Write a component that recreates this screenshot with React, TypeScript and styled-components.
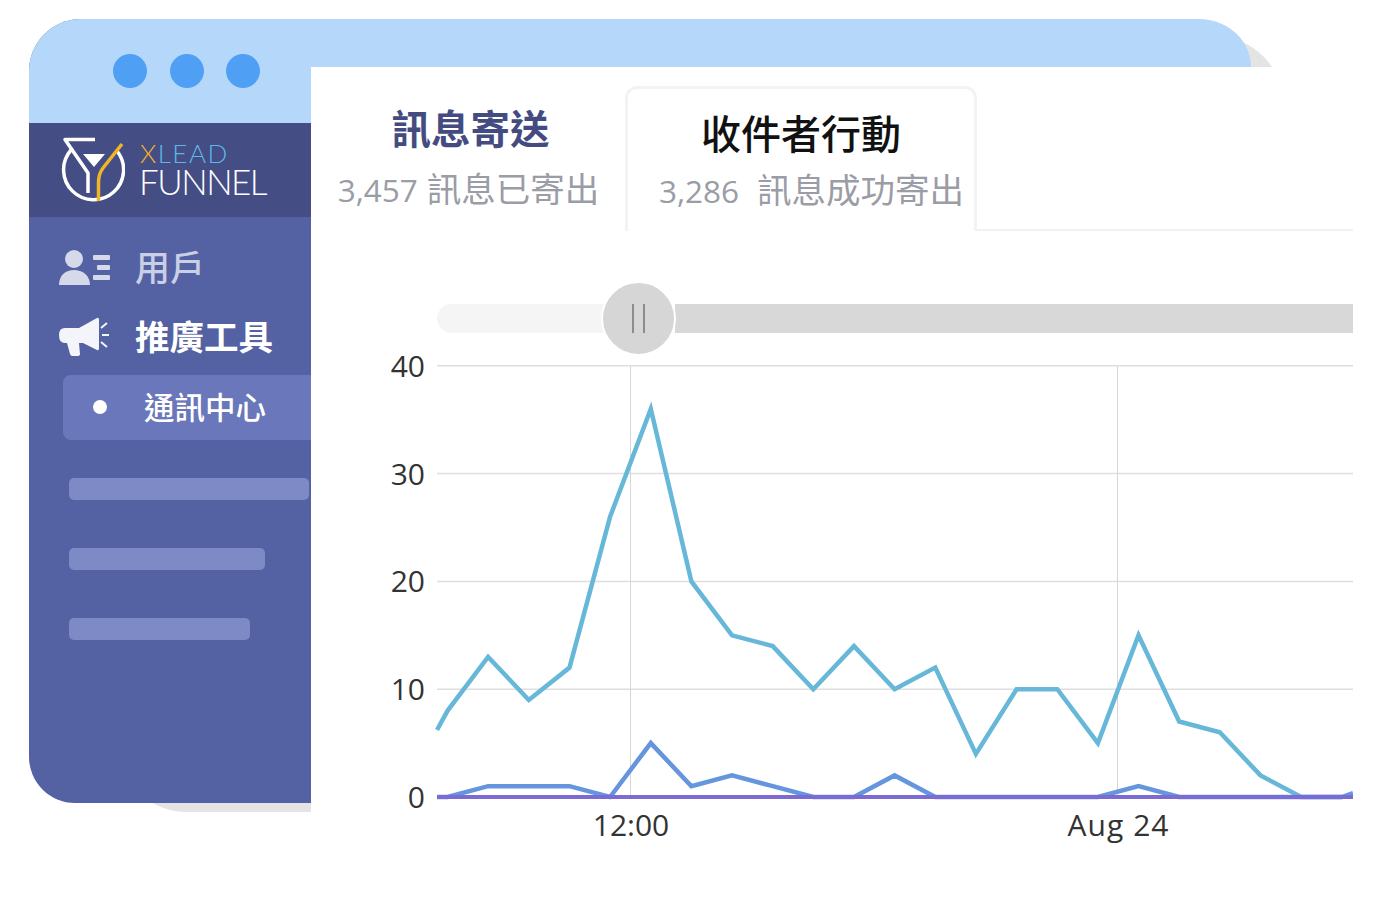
import styled, { createGlobalStyle } from 'styled-components';

const GlobalStyle = createGlobalStyle`
  html, body {
    margin: 0;
    padding: 0;
    background: #fff;
    font-family: 'Open Sans', 'Noto Sans CJK TC', sans-serif;
  }
`;

// 圖表資料 (value, 以 40.65px 為一格)
const stepX = 40.65;
const startX = 447.5;
const toY = (v: number) => 797 - v * 10.78;
const visitors = [8, 13, 9, 12, 26, 36, 20, 15, 14, 10, 14, 10, 12, 4, 10, 10, 5, 15, 7, 6, 2, 0, 0];
const sent = [0, 1, 1, 1, 0, 5, 1, 2, 1, 0, 0, 2, 0, 0, 0, 0, 0, 1, 0, 0, 0, 0, 0];

const toPoints = (data: number[]) =>
  data.map((v, i) => `${(startX + i * stepX).toFixed(1)},${toY(v).toFixed(1)}`).join(' ');

const yTicks = [0, 10, 20, 30, 40];

const App = () => {
  return (
    <Stage>
      <GlobalStyle />
      <Frame>
        <Backing />
        <Sidebar>
          <Dots>
            <Dot />
            <Dot />
            <Dot />
          </Dots>
          <LogoBand>
            <LogoMark />
            <LogoText>
              <LogoTop>
                <em>X</em>LEAD
              </LogoTop>
              <LogoBottom>FUNNEL</LogoBottom>
            </LogoText>
          </LogoBand>
          <Nav>
            <NavRow>
              <UserIcon />
              <NavLabel>用戶</NavLabel>
            </NavRow>
            <NavRow $active>
              <MegaphoneIcon />
              <NavLabel $active>推廣工具</NavLabel>
            </NavRow>
            <SubItem>
              <Bullet />
              <SubLabel>通訊中心</SubLabel>
            </SubItem>
            <Skeletons>
              <Skeleton $width={240} />
              <Skeleton $width={196} />
              <Skeleton $width={181} />
            </Skeletons>
          </Nav>
        </Sidebar>
        <Main>
          <TopStrip />
          <Panel>
            <Tabs>
              <Tab>
                <TabTitle>訊息寄送</TabTitle>
                <TabSub>
                  <b>3,457</b> 訊息已寄出
                </TabSub>
              </Tab>
              <Tab $active>
                <TabTitle $active>收件者行動</TabTitle>
                <TabSub $active>
                  <b>3,286</b>&nbsp; 訊息成功寄出
                </TabSub>
              </Tab>
            </Tabs>
            <Slider>
              <TrackLeft />
              <TrackRight />
              <Thumb>
                <Grip />
                <Grip />
              </Thumb>
            </Slider>
            <Chart viewBox="311 340 1042 510" width={1042} height={510}>
              {yTicks.map((t) => (
                <g key={t}>
                  <line x1={437} x2={1353} y1={toY(t)} y2={toY(t)} stroke="#dedede" strokeWidth={1.5} />
                  <AxisText x={425} y={toY(t) + 11} textAnchor="end">
                    {t}
                  </AxisText>
                </g>
              ))}
              <line x1={630.5} x2={630.5} y1={366} y2={797} stroke="#d6d6d6" />
              <line x1={1117.5} x2={1117.5} y1={366} y2={797} stroke="#d6d6d6" />
              <polyline
                points={`437,730 ${toPoints(visitors)}`}
                fill="none"
                stroke="#67b7d9"
                strokeWidth={4.5}
              />
              <polyline
                points={`437,797 ${toPoints(sent)} 1353,793`}
                fill="none"
                stroke="#6495dd"
                strokeWidth={4.5}
              />
              <line x1={437} x2={1353} y1={797} y2={797} stroke="#7b6bd3" strokeWidth={4} />
              <AxisText x={631} y={836} textAnchor="middle">
                12:00
              </AxisText>
              <AxisText x={1118} y={836} textAnchor="middle" textLength={101}>
                Aug 24
              </AxisText>
            </Chart>
          </Panel>
        </Main>
      </Frame>
    </Stage>
  );
};

export default App;

const LogoMark = () => (
  <svg width="64" height="68" viewBox="61 136 64 68" fill="none">
    <path d="M95 139.500H65L88 173V193" stroke="#fff" strokeWidth="3.500" strokeLinejoin="round" />
    <path d="M71 150A30 30 0 1 0 117 151" stroke="#fff" strokeWidth="3.500" />
    <path d="M83 154H105L94 167Z" fill="#fff" />
    <path d="M122 144L103 168Q98.500 174 98.500 182V201" stroke="#f0b429" strokeWidth="3.500" />
  </svg>
);

const UserIcon = () => (
  <svg width="52" height="38" viewBox="0 0 52 38" fill="#d5d9ea">
    <circle cx="15" cy="10" r="9" />
    <path d="M0 36C0 26 7 21 15 21S31 26 31 36Z" />
    <rect x="34" y="6" width="17" height="5" rx="1" />
    <rect x="38" y="16" width="13" height="5" rx="1" />
    <rect x="34" y="26" width="17" height="5" rx="1" />
  </svg>
);

const MegaphoneIcon = () => (
  <svg width="52" height="40" viewBox="0 0 52 40" fill="#f4f5fa">
    <path d="M6 11H20L38 1Q40 0 40 3V31Q40 34 38 33L24 26H20L21 37Q21 39 18 39H13Q12 39 11 37L8 26H6Q0 26 0 18Q0 11 6 11Z" />
    <path d="M42 11L48 6M43 18H50M42 25L48 30" stroke="#f4f5fa" strokeWidth="2" />
  </svg>
);

const Stage = styled.div`
  width: 1382px;
  height: 905px;
  padding: 19px 29px 0;
  box-sizing: border-box;
  overflow: hidden;
  background: #fff;
`;

const Frame = styled.div`
  position: relative;
  display: flex;
  align-items: flex-start;
  isolation: isolate;
`;

const Backing = styled.div`
  position: absolute;
  z-index: -1;
  left: 88px;
  top: 17px;
  width: 1167px;
  height: 776px;
  background: #e4e4e4;
  border-radius: 0 70px 0 70px;
`;

const Sidebar = styled.aside`
  width: 282px;
  height: 784px;
  display: flex;
  flex-direction: column;
  flex-shrink: 0;
  overflow: hidden;
  background: #5462a3;
  border-radius: 52px 0 0 46px;
`;

const Dots = styled.div`
  height: 104px;
  box-sizing: border-box;
  padding: 35px 0 0 84px;
  display: flex;
  gap: 22.500px;
  background: #b5d8fa;
`;

const Dot = styled.span`
  width: 34px;
  height: 34px;
  border-radius: 50%;
  background: #4fa0f5;
`;

const LogoBand = styled.div`
  height: 94px;
  box-sizing: border-box;
  padding-left: 32px;
  display: flex;
  align-items: center;
  gap: 14px;
  background: #444d84;
`;

const LogoText = styled.div`
  display: flex;
  flex-direction: column;
  font-family: Lato, 'Open Sans', sans-serif;
  font-weight: 300;
`;

const LogoTop = styled.div`
  margin-left: 1px;
  font-size: 26px;
  line-height: 23px;
  letter-spacing: 1.500px;
  color: #5cb8e8;

  em {
    font-style: normal;
    color: #f0b429;
  }
`;

const LogoBottom = styled.div`
  font-size: 35px;
  line-height: 33px;
  letter-spacing: -1.500px;
  color: #fff;
`;

const Nav = styled.nav`
  display: flex;
  flex-direction: column;
  padding-top: 31px;
`;

const NavRow = styled.div<{ $active?: boolean }>`
  height: 40px;
  margin-bottom: 29px;
  padding-left: 30px;
  display: flex;
  align-items: center;
  gap: 24px;

  &:nth-child(2) {
    margin-bottom: 18px;
  }
`;

const NavLabel = styled.span<{ $active?: boolean }>`
  font-size: ${({ $active }) => ($active ? '34.500px' : '35px')};
  line-height: 40px;
  font-weight: ${({ $active }) => ($active ? 700 : 500)};
  color: ${({ $active }) => ($active ? '#fff' : '#c9cfe5')};
`;

const SubItem = styled.div`
  height: 65px;
  box-sizing: border-box;
  margin-left: 34px;
  padding: 0 0 2px 30px;
  display: flex;
  align-items: center;
  gap: 37px;
  background: #6a77ba;
  border-radius: 8px 0 0 8px;
`;

const Bullet = styled.span`
  width: 14px;
  height: 14px;
  border-radius: 50%;
  background: #fff;
`;

const SubLabel = styled.span`
  font-size: 30.500px;
  line-height: 40px;
  font-weight: 500;
  color: #fff;
`;

const Skeletons = styled.div`
  display: flex;
  flex-direction: column;
  gap: 48px;
  padding: 38px 0 0 40px;
`;

const Skeleton = styled.div<{ $width: number }>`
  width: ${({ $width }) => $width}px;
  height: 22px;
  border-radius: 5px;
  background: #7e8ac6;
`;

const Main = styled.main`
  width: 1042px;
  display: flex;
  flex-direction: column;
`;

const TopStrip = styled.div`
  width: 940px;
  height: 48px;
  background: #b5d8fa;
  border-radius: 0 52px 0 0 / 0 48px 0 0;
`;

const Panel = styled.div`
  background: #fff;
  display: flex;
  flex-direction: column;
  height: 790px;
`;

const Tabs = styled.div`
  height: 164px;
  box-sizing: border-box;
  display: flex;
  align-items: flex-end;
  border-bottom: 2px solid #f1f1f1;
`;

const Tab = styled.div<{ $active?: boolean }>`
  width: ${({ $active }) => ($active ? '352px' : '314px')};
  height: 145px;
  box-sizing: border-box;
  margin-bottom: -2px;
  display: flex;
  flex-direction: column;
  align-items: center;
  padding-top: ${({ $active }) => ($active ? '19px' : '17px')};
  background: #fff;
  border: ${({ $active }) => ($active ? '3px solid #f3f3f3' : 'none')};
  border-bottom: none;
  border-radius: 12px 12px 0 0;
`;

const TabTitle = styled.div<{ $active?: boolean }>`
  margin-left: ${({ $active }) => ($active ? '0' : '5px')};
  font-size: ${({ $active }) => ($active ? '40px' : '39.500px')};
  line-height: 52px;
  font-weight: ${({ $active }) => ($active ? 500 : 700)};
  color: ${({ $active }) => ($active ? '#111' : '#444b80')};
`;

const TabSub = styled.div<{ $active?: boolean }>`
  margin-top: ${({ $active }) => ($active ? '6px' : '10px')};
  margin-left: ${({ $active }) => ($active ? '21px' : '1px')};
  font-size: 34.500px;
  line-height: 48px;
  color: #9a9ca6;
  white-space: nowrap;

  b {
    font-size: 31.500px;
    font-weight: 400;
  }
`;

const Slider = styled.div`
  position: relative;
  height: 29px;
  margin: 73px 0 0 126px;
  display: flex;
`;

const TrackLeft = styled.div`
  width: 170px;
  background: #f5f5f5;
  border-radius: 15px 0 0 15px;
`;

const TrackRight = styled.div`
  flex: 1;
  margin-left: 68px;
  background: #d8d8d8;
`;

const Thumb = styled.div`
  position: absolute;
  left: 164px;
  top: -23px;
  width: 75px;
  height: 75px;
  box-sizing: border-box;
  display: flex;
  justify-content: center;
  align-items: center;
  gap: 9px;
  border-radius: 50%;
  border: 2px solid #fff;
  background: #d6d6d6;
`;

const Grip = styled.span`
  width: 2px;
  height: 29px;
  background: #8c8c8c;
`;

const Chart = styled.svg`
  display: block;
  margin-top: 7px;
`;

const AxisText = styled.text`
  font-family: 'Open Sans', sans-serif;
  font-size: 30px;
  fill: #333;
`;
